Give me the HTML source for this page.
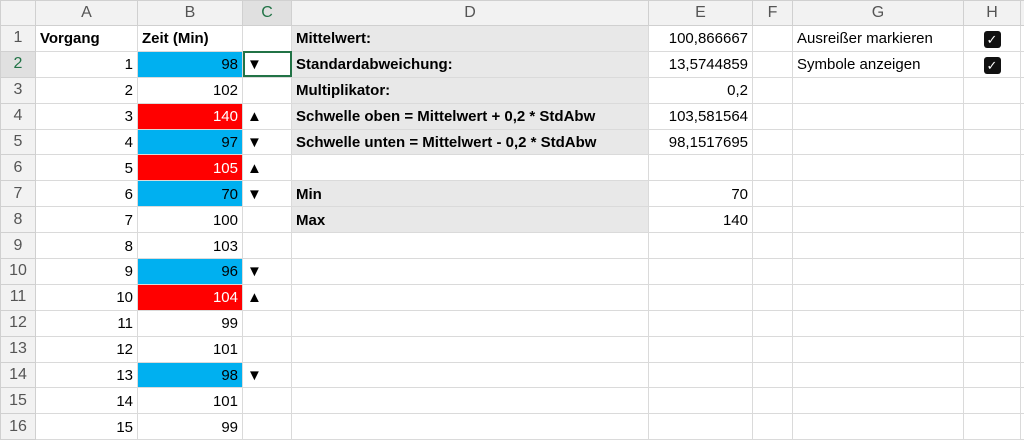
<!DOCTYPE html>
<html><head><meta charset="utf-8"><style>
body{margin:0;width:1024px;height:439px;overflow:hidden;background:#fff;font-family:"Liberation Sans",sans-serif;font-size:15px;color:#000;position:relative}
table{border-collapse:collapse;table-layout:fixed;position:absolute;left:0;top:0;width:1040px}
td{border:1px solid #dadada;padding:0 4px;height:25.9px;white-space:nowrap;overflow:hidden;line-height:22px;padding-top:2px;box-sizing:border-box}
tr.h td{height:25px;background:#f2f2f2;color:#555;text-align:center;font-size:16px;border-color:#d0d0d0;padding-top:0}
td.rh{background:#f2f2f2;color:#555;text-align:center;font-size:16px;border-color:#d0d0d0;padding:0}
.r{text-align:right}.b{font-weight:bold}.g{background:#e8e8e8}
.bl{background:#00b0f0}.rd{background:#ff0000;color:#fff}
.sel{background:#e0e0e0!important;color:#217346!important}
.cb{display:inline-block;width:17px;height:17px;background:#111;border-radius:3px;color:#fff;font-size:13px;line-height:17px;text-align:center;vertical-align:middle}
</style></head><body>
<table>
<colgroup><col style="width:35px"><col style="width:102px"><col style="width:105px"><col style="width:49px"><col style="width:357px"><col style="width:104px"><col style="width:40px"><col style="width:171px"><col style="width:57px"><col style="width:20px"></colgroup>
<tr class="h"><td></td><td>A</td><td>B</td><td class="sel">C</td><td>D</td><td>E</td><td>F</td><td>G</td><td>H</td><td></td></tr>
<tr><td class="rh">1</td><td class="b">Vorgang</td><td class="b">Zeit (Min)</td><td></td><td class="b g">Mittelwert:</td><td class="r">100,866667</td><td></td><td>Ausreißer markieren</td><td style="text-align:center"><span class="cb">✓</span></td><td></td></tr>
<tr><td class="rh sel">2</td><td class="r">1</td><td class="r bl">98</td><td style="outline:2px solid #217346;outline-offset:-2px">▼</td><td class="b g">Standardabweichung:</td><td class="r">13,5744859</td><td></td><td>Symbole anzeigen</td><td style="text-align:center"><span class="cb">✓</span></td><td></td></tr>
<tr><td class="rh">3</td><td class="r">2</td><td class="r">102</td><td></td><td class="b g">Multiplikator:</td><td class="r">0,2</td><td></td><td></td><td></td><td></td></tr>
<tr><td class="rh">4</td><td class="r">3</td><td class="r rd">140</td><td>▲</td><td class="b g">Schwelle oben = Mittelwert + 0,2 * StdAbw</td><td class="r">103,581564</td><td></td><td></td><td></td><td></td></tr>
<tr><td class="rh">5</td><td class="r">4</td><td class="r bl">97</td><td>▼</td><td class="b g">Schwelle unten = Mittelwert - 0,2 * StdAbw</td><td class="r">98,1517695</td><td></td><td></td><td></td><td></td></tr>
<tr><td class="rh">6</td><td class="r">5</td><td class="r rd">105</td><td>▲</td><td></td><td></td><td></td><td></td><td></td><td></td></tr>
<tr><td class="rh">7</td><td class="r">6</td><td class="r bl">70</td><td>▼</td><td class="b g">Min</td><td class="r">70</td><td></td><td></td><td></td><td></td></tr>
<tr><td class="rh">8</td><td class="r">7</td><td class="r">100</td><td></td><td class="b g">Max</td><td class="r">140</td><td></td><td></td><td></td><td></td></tr>
<tr><td class="rh">9</td><td class="r">8</td><td class="r">103</td><td></td><td></td><td></td><td></td><td></td><td></td><td></td></tr>
<tr><td class="rh">10</td><td class="r">9</td><td class="r bl">96</td><td>▼</td><td></td><td></td><td></td><td></td><td></td><td></td></tr>
<tr><td class="rh">11</td><td class="r">10</td><td class="r rd">104</td><td>▲</td><td></td><td></td><td></td><td></td><td></td><td></td></tr>
<tr><td class="rh">12</td><td class="r">11</td><td class="r">99</td><td></td><td></td><td></td><td></td><td></td><td></td><td></td></tr>
<tr><td class="rh">13</td><td class="r">12</td><td class="r">101</td><td></td><td></td><td></td><td></td><td></td><td></td><td></td></tr>
<tr><td class="rh">14</td><td class="r">13</td><td class="r bl">98</td><td>▼</td><td></td><td></td><td></td><td></td><td></td><td></td></tr>
<tr><td class="rh">15</td><td class="r">14</td><td class="r">101</td><td></td><td></td><td></td><td></td><td></td><td></td><td></td></tr>
<tr><td class="rh">16</td><td class="r">15</td><td class="r">99</td><td></td><td></td><td></td><td></td><td></td><td></td><td></td></tr>
</table>
</body></html>
